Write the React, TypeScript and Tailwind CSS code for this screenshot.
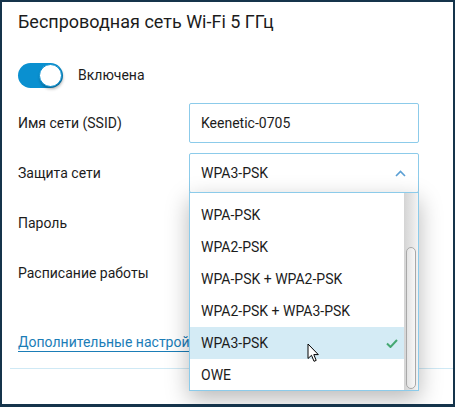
const options = [
  "WPA-PSK",
  "WPA2-PSK",
  "WPA-PSK + WPA2-PSK",
  "WPA2-PSK + WPA3-PSK",
  "WPA3-PSK",
  "OWE",
];

const selected = "WPA3-PSK";

function Toggle() {
  return (
    <div className="flex h-[25px] w-[45px] items-center justify-end rounded-full bg-[#0a90d0] pr-[1px]">
      <div className="h-[23px] w-[23px] rounded-full border border-[#0a90d0] bg-white shadow-[1px_2px_3px_rgba(0,0,0,0.3)]" />
    </div>
  );
}

function Row({ label, children }: { label: string; children?: React.ReactNode }) {
  return (
    <div className="flex h-10 items-center">
      <div className="w-[171px] text-[14px]">{label}</div>
      {children}
    </div>
  );
}

function Dropdown() {
  return (
    <div className="absolute left-[187px] top-[190px] flex h-[199px] w-[230px] overflow-hidden border border-[#8ccbea] bg-white shadow-[0_8px_22px_rgba(0,0,0,0.28)]">
      <div className="flex-1 pt-[6px]">
        {options.map((opt) => (
          <div
            key={opt}
            className={
              opt === selected
                ? "flex h-8 items-center justify-between bg-[#d4ebf5] pl-[11px] pr-[6px] text-[14px]"
                : "flex h-8 items-center pl-[11px] text-[14px]"
            }
          >
            {opt}
            {opt === selected && (
              <svg width="12" height="9" viewBox="0 0 12 9" fill="none">
                <path d="M1 4.5 L4.5 8 L11 1" stroke="#45a872" strokeWidth="2" />
              </svg>
            )}
          </div>
        ))}
      </div>
      {/* scrollbar */}
      <div className="w-[14px] bg-gradient-to-r from-[#d4d4d4] to-[#f3f3f3] px-[2px]">
        <div className="mt-[54px] h-[142px] rounded-full border border-[#a8a8a8] bg-gradient-to-r from-[#e4e4e4] to-[#f7f7f7]" />
      </div>
    </div>
  );
}

export default function App() {
  return (
    <div className="h-[407px] w-[455px] bg-[#15344b] px-[2px] pb-[3px] pt-[2px] font-['Roboto',sans-serif] text-[#1c1c1c]">
      <div className="relative h-full overflow-hidden bg-white">
        <h1 className="pl-4 pt-2 text-[18px] leading-6">Беспроводная сеть Wi-Fi 5 ГГц</h1>

        <div className="mt-[29px] flex items-center gap-[15px] pl-4">
          <Toggle />
          <span className="text-[14px]">Включена</span>
        </div>

        <div className="mt-[15px] flex flex-col gap-[10px] pl-4">
          <Row label="Имя сети (SSID)">
            <div className="flex h-10 w-[230px] items-center rounded-[2px] border border-[#8ccbea] pl-[11px] text-[14px]">
              Keenetic-0705
            </div>
          </Row>
          <Row label="Защита сети">
            <div className="flex h-10 w-[230px] items-center justify-between rounded-[2px] border border-[#8ccbea] pl-[11px] pr-[12px] text-[14px]">
              WPA3-PSK
              <svg width="11" height="7" viewBox="0 0 11 7" fill="none">
                <path d="M1 6 L5.5 1.5 L10 6" stroke="#5a9fd4" strokeWidth="1.6" />
              </svg>
            </div>
          </Row>
          <Row label="Пароль" />
          <Row label="Расписание работы" />
        </div>

        <div className="mt-[39px] pl-4 leading-5">
          <a className="text-[14px] text-[#1b7db7] underline decoration-1 underline-offset-[4px]">
            Дополнительные настройки
          </a>
        </div>

        <div className="ml-2 mt-[16px] h-px bg-[#cfe9f5]" />

        <Dropdown />

        {/* mouse pointer */}
        <svg className="absolute left-[305px] top-[341px]" width="13" height="20" viewBox="0 0 13 20">
          <path
            d="M1 1 L1 15.5 L4.5 12.3 L7 18.3 L9.2 17.4 L6.8 11.6 L11.3 11.6 Z"
            fill="#fff"
            stroke="#000"
            strokeWidth="1"
            strokeLinejoin="round"
          />
        </svg>
      </div>
    </div>
  );
}
